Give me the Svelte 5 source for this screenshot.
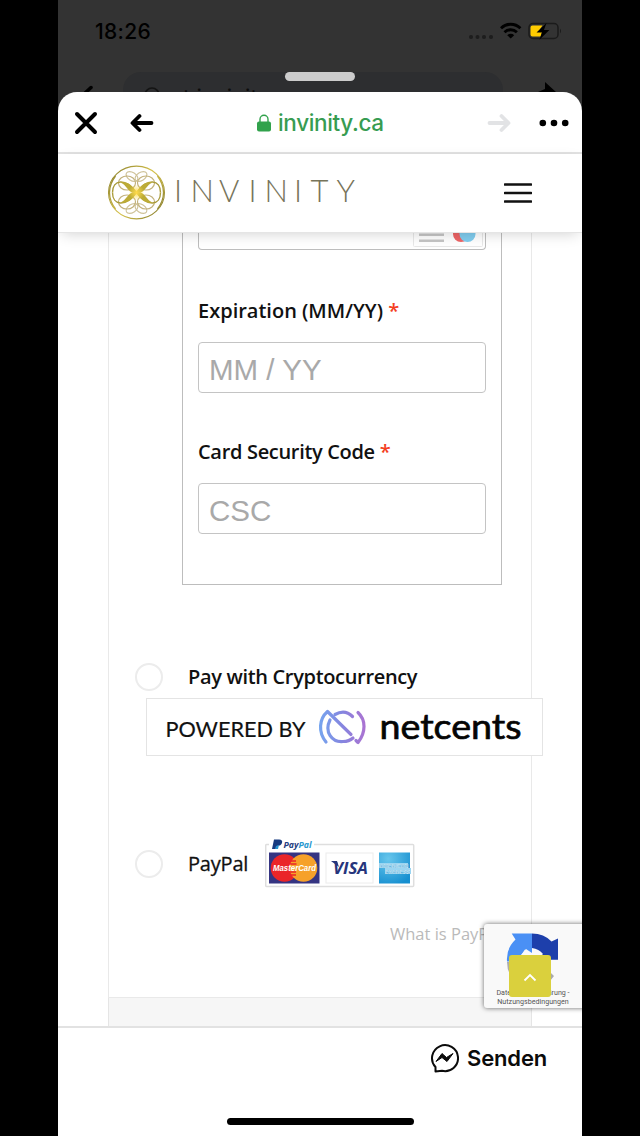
<script lang="ts">
	const fields = [
		{ id: 'expiration', label: 'Expiration (MM/YY)', placeholder: 'MM / YY' },
		{ id: 'security', label: 'Card Security Code', placeholder: 'CSC' }
	];

	// quarter of the emblem, mirrored into the other three
	const mirrors = ['1 1', '-1 1', '1 -1', '-1 -1'];
</script>

<div class="phone">
	<div class="backdrop">
		<div class="status">
			<span class="time">18:26</span>
			<svg class="signal" width="94" height="20" viewBox="0 0 94 20">
				<g fill="#1d1d1d">
					<circle cx="3" cy="16" r="2" />
					<circle cx="9.5" cy="16" r="2" />
					<circle cx="16" cy="16" r="2" />
					<circle cx="23" cy="16" r="2" />
				</g>
				<g fill="none" stroke="#000" stroke-width="2.9">
					<path d="M33 7.2a14 14 0 0 1 19.400 0" />
					<path d="M36.500 11.200a9 9 0 0 1 12.400 0" />
				</g>
				<path d="M39.200 14.200a5 5 0 0 1 7 0l-3.500 3.200z" />
				<rect x="61" y="2.500" width="29" height="15" rx="4" fill="none" stroke="#1b1b1b" stroke-width="1.500" />
				<path d="M92 7.500q2 2.500 0 5z" fill="#1b1b1b" />
				<path d="M64.500 4.500h10l-4.500 6.500h4l-1.500 4.500h-8q-2 0-2-2v-7q0-2 2-2z" fill="#fc0" />
				<path d="M78.500 2l-10 9.400h5.500l-2.600 7.300 10-9.700h-5.500z" />
			</svg>
		</div>
		<div class="grabber"></div>
		<div class="behind">
			<svg class="behind-back" width="12" height="10" viewBox="0 0 12 10"><path d="M10 2.500L2 10" stroke="#000" stroke-width="3.500" stroke-linecap="round" /></svg>
			<div class="search">
				<svg width="18" height="18" viewBox="0 0 18 18"><circle cx="9" cy="9" r="7" fill="none" stroke="#141414" stroke-width="1.700" /></svg>
				<span>t invinity</span>
			</div>
			<svg class="share" width="18" height="10" viewBox="0 0 18 10"><path d="M7 0l11 10H0L7 7z" /></svg>
		</div>
	</div>

	<div class="sheet">
		<header class="browser">
			<svg class="close" width="24" height="24" viewBox="0 0 24 24"><path d="M3 3l18 18M21 3L3 21" /></svg>
			<svg class="arrow back" width="24" height="20" viewBox="0 0 24 20"><path d="M21.500 10H3M9.500 3L2.500 10l7 7" /></svg>
			<div class="address">
				<svg width="16" height="18" viewBox="0 0 16 18">
					<path d="M4 9V5.200a4 4 0 0 1 8 0V9" fill="none" stroke="#31a24c" stroke-width="1.400" />
					<rect x="1" y="7.500" width="14" height="10" rx="2" fill="#31a24c" />
				</svg>
				<span>invinity.ca</span>
			</div>
			<svg class="arrow forward" width="24" height="20" viewBox="0 0 24 20"><path d="M2.500 10H21M14.500 3l7 7-7 7" /></svg>
			<svg class="dots" width="30" height="8" viewBox="0 0 30 8">
				<circle cx="3.800" cy="4" r="3.300" />
				<circle cx="15" cy="4" r="3.300" />
				<circle cx="26.200" cy="4" r="3.300" />
			</svg>
		</header>

		<div class="site">
			<svg class="logo" width="252" height="56" viewBox="0 0 252 56">
				<defs>
					<linearGradient id="gold" gradientUnits="userSpaceOnUse" x1="-26" y1="-20" x2="26" y2="20">
						<stop offset="0" stop-color="#8f8430" />
						<stop offset="0.500" stop-color="#d6c24a" />
						<stop offset="1" stop-color="#8a8030" />
					</linearGradient>
					<radialGradient id="glow">
						<stop offset="0" stop-color="#ffd94a" />
						<stop offset="1" stop-color="#ffe052" stop-opacity="0" />
					</radialGradient>
				</defs>
				<g fill="none" stroke="url(#gold)" transform="translate(29.500 27.500)">
					<ellipse rx="28" ry="26.400" stroke-width="1.100" />
					<path d="M-21-16.500C-29-6-29 6-21 16.500M21-16.500C29-6 29 6 21 16.500" stroke-width="1.300" />
					{#each mirrors as scale}
						<g transform="scale({scale})">
							<ellipse cx="-4.500" cy="-16" rx="6.500" ry="4" transform="rotate(32 -4.500 -16)" stroke="#cfc39a" stroke-width="1.200" />
							<ellipse cx="-9.500" cy="-9.500" rx="8.500" ry="7" stroke="#c3b27c" stroke-width="1.200" />
							<path d="M-24 0C-24-13-11-15 0 0" stroke-width="1.400" />
							<path d="M0 0C-4-8-10-11-16-10C-10-8-8 2 0 0" fill="#bcab36" stroke="none" />
						</g>
					{/each}
					<circle r="8" fill="url(#glow)" stroke="none" />
				</g>
				<text x="67 83.500 112 141.500 157.500 187 203.500 229.500" y="37">INVINITY</text>
			</svg>
			<svg class="menu" width="28" height="22" viewBox="0 0 28 22"><path d="M1 2.500h26M1 11h26M1 19.500h26" /></svg>
		</div>

		<main>
			<div class="payment">
				<div class="card">
					<div class="number">
						<svg width="72" height="15" viewBox="0 0 72 15">
							<path d="M.500 0v12.500q0 1 1 1h67q1 0 1-1V0" fill="none" stroke="#e8e8e8" />
							<path d="M6 1.700h25M6 7.700h25" stroke="#c6c6c6" stroke-width="2.400" />
							<circle cx="48" cy="1" r="8" fill="#ee6566" />
							<circle cx="54.500" cy="1" r="8" fill="#81cdef" />
						</svg>
					</div>
					{#each fields as field}
						<label class={field.id} for={field.id}>{field.label} <i>*</i></label>
						<input id={field.id} type="text" placeholder={field.placeholder} />
					{/each}
				</div>

				<div class="method crypto">
					<span class="radio"></span>
					<span class="name">Pay with Cryptocurrency</span>
				</div>
				<div class="powered">
					<svg width="394" height="56" viewBox="0 0 394 56">
						<defs>
							<linearGradient id="violet" gradientUnits="userSpaceOnUse" x1="172" y1="0" x2="219" y2="0">
								<stop offset="0" stop-color="#75a5ef" />
								<stop offset="0.500" stop-color="#8585df" />
								<stop offset="1" stop-color="#ac72d1" />
							</linearGradient>
						</defs>
						<text class="by" x="18.500" y="37.500" textLength="140" lengthAdjust="spacingAndGlyphs">POWERED BY</text>
						<g fill="none" stroke="url(#violet)" stroke-width="3.200" stroke-linecap="round" stroke-linejoin="round">
							<path d="M179 43C171 33 172 20 180.500 12.500L204 35.500" />
							<path d="M183 21C177 33 185 43.500 196 42.500Q202 42.500 206 39" />
							<path d="M188 15.500Q198 10 205.500 17.500" />
							<path d="M211 13.500C219 21 219 33 211 43.500l-2-2" />
						</g>
						<text class="netcents" x="232.500" y="39.500" textLength="142" lengthAdjust="spacingAndGlyphs">netcents</text>
					</svg>
				</div>

				<div class="method paypal">
					<span class="radio"></span>
					<span class="name">PayPal</span>
					<svg class="cards" width="150" height="50" viewBox="0 0 150 50">
						<rect x="0.700" y="5.500" width="148" height="42" rx="1" fill="#fff" stroke="#dedede" stroke-width="1.500" />
						<path d="M4 3h45v6H4z" fill="#fff" />
						<path d="M9 .5h5q4 0 3 3.500-1 3-5 3l-1 3H7z" fill="#173b80" />
						<path d="M14 6l-1 4h-3l1-3z" fill="#2794cf" />
						<text class="pp" x="18.500" y="8.500" textLength="28" lengthAdjust="spacingAndGlyphs"><tspan fill="#243c80">Pay</tspan><tspan fill="#2898cf">Pal</tspan></text>
						<rect x="4" y="13.500" width="50.500" height="31" fill="#353482" />
						<circle cx="19.500" cy="29" r="13.800" fill="#ea2529" />
						<circle cx="38.500" cy="29" r="13.800" fill="#f6a12a" />
						<path d="M25 22h6M24.500 25h7M25 33h6M26 36h5" stroke="#ea2529" stroke-width="1.500" />
						<text class="mc" x="8" y="32" textLength="43" lengthAdjust="spacingAndGlyphs">MasterCard</text>
						<rect x="61" y="14" width="47" height="30" fill="#fff" stroke="#ececec" />
						<path d="M66 22h6l2 6z" fill="#26357c" />
						<text class="visa" x="68" y="34.500" textLength="35" lengthAdjust="spacingAndGlyphs">VISA</text>
						<defs>
							<radialGradient id="amex" cx="0.300" cy="0.200" r="0.900">
								<stop offset="0" stop-color="#67c6ec" />
								<stop offset="1" stop-color="#168fd0" />
							</radialGradient>
						</defs>
						<rect x="114" y="13.500" width="31" height="31" fill="url(#amex)" />
						<path d="M114 24h29v5h3v6h-26v-6h-6z" fill="#9bd5f1" />
						<text class="amex" x="114.500" y="29" textLength="29" lengthAdjust="spacingAndGlyphs">AMERICAN</text>
						<text class="amex" x="120" y="34.500" textLength="25" lengthAdjust="spacingAndGlyphs">EXPRESS</text>
					</svg>
				</div>
				<div class="what">What is PayPal?</div>
			</div>
			<div class="place-order"></div>

			<div class="captcha">
				<svg width="60" height="56" viewBox="0 0 60 56">
					<path d="M6 31h11q1 8 7 11l-8 10Q6 44 6 31z" fill="#ababab" />
					<path d="M34 47q9-1 14-7l5 5-4 5z" fill="#ababab" />
					<path d="M10.700 2.500H31v21l-7-5-8 12H6q-1-13 8.500-22z" fill="#4a90f5" />
					<path d="M31 2.500q12 0 19.500 8L57 7.500v21.300H41q-4-7-10-11z" fill="#1d3fab" />
					<path d="M20 24l5-6 6 4v-5q7 1 11 6l-5 5H18z" fill="#f9f9f9" />
				</svg>
				<p>Datenschutzerklärung -<br />Nutzungsbedingungen</p>
			</div>
			<button class="to-top" aria-label="Nach oben">
				<svg width="14" height="9" viewBox="0 0 14 9"><path d="M1.500 7.500L7 2l5.500 5.500" /></svg>
			</button>
		</main>

		<footer>
			<div class="send">
				<svg width="30" height="30" viewBox="0 0 30 30">
					<path d="M6.500 24A13 13 0 1 1 13 27.800L6.500 28.500z" fill="none" stroke="#0b0b0b" stroke-width="2" stroke-linejoin="round" />
					<path d="M7 18.500l6-8 4.500 4 6.500-4-6 8-5-4z" fill="#0b0b0b" stroke="#0b0b0b" stroke-linejoin="round" />
				</svg>
				<span>Senden</span>
			</div>
			<div class="home"></div>
		</footer>
	</div>
</div>

<style>
	:global(body) {
		background: #000;
	}
	.phone {
		width: 524px;
		height: 1136px;
		margin: 0 auto;
		background: #333;
		overflow: hidden;
		font-family: 'Open Sans', sans-serif;
		color: #111;
	}
	svg {
		display: block;
		flex: none;
	}
	.backdrop {
		height: 92px;
		display: flex;
		flex-direction: column;
		position: relative;
		overflow: hidden;
	}
	.status {
		height: 72px;
		box-sizing: border-box;
		padding: 20px 20px 0 37px;
		display: flex;
		justify-content: space-between;
		align-items: flex-start;
	}
	.time {
		font: 500 21px/24px Inter, sans-serif;
		letter-spacing: 0.3px;
		color: #000;
	}
	.signal {
		margin-top: 1px;
	}
	.grabber {
		position: absolute;
		z-index: 1;
		top: 72px;
		left: 227px;
		width: 70px;
		height: 9px;
		border-radius: 5px;
		background: #ccc;
	}
	.behind {
		height: 20px;
		display: flex;
		align-items: flex-start;
	}
	.behind-back {
		margin: 13px 0 0 23px;
	}
	.search {
		width: 380px;
		height: 50px;
		margin-left: 30px;
		padding: 14px 0 0 20px;
		box-sizing: border-box;
		border-radius: 18px;
		background: #2d2e30;
		display: flex;
		gap: 22px;
		font: 22px/24px Inter, sans-serif;
		color: #0c0c0c;
	}
	.search span {
		margin-top: -1px;
	}
	.share {
		margin: 10px 0 0 35px;
	}

	.sheet {
		height: 1044px;
		display: flex;
		flex-direction: column;
		background: #fff;
		border-radius: 19px 19px 0 0;
		overflow: hidden;
	}
	.browser {
		height: 62px;
		box-sizing: border-box;
		padding: 2px 13px 0 16px;
		display: flex;
		align-items: center;
		border-bottom: 2px solid #e2e2e2;
	}
	.close {
		fill: none;
		stroke: #000;
		stroke-width: 4;
		stroke-linecap: round;
	}
	.arrow {
		fill: none;
		stroke: #000;
		stroke-width: 3.8;
		stroke-linecap: round;
		stroke-linejoin: round;
	}
	.back {
		margin-left: 32px;
	}
	.forward {
		stroke: #e2e3e5;
		margin-right: 28px;
	}
	.address {
		margin: 0 auto 0 102px;
		display: flex;
		align-items: center;
		gap: 6px;
		font: 500 22.5px/28px Inter, sans-serif;
		letter-spacing: -0.35px;
		color: #379c51;
	}
	.site {
		height: 79px;
		box-sizing: border-box;
		padding: 0 50px 0 49px;
		display: flex;
		align-items: center;
		justify-content: space-between;
		border-bottom: 1px solid #e5e5e5;
		box-shadow: 0 4px 14px -4px rgba(0, 0, 0, 0.2);
		position: relative;
		z-index: 1;
		background: #fff;
	}
	.logo text {
		font: 300 31px Lato, sans-serif;
		fill: #77745a;
	}
	.menu {
		fill: none;
		stroke: #111;
		stroke-width: 2.7;
		stroke-linecap: round;
	}

	main {
		height: 793px;
		position: relative;
		overflow: hidden;
	}
	.payment {
		width: 424px;
		height: 765px;
		box-sizing: border-box;
		margin-left: 50px;
		border: 1px solid #e9e9e9;
		border-top: 0;
	}
	.card {
		width: 320px;
		height: 352px;
		box-sizing: border-box;
		margin-left: 73px;
		padding: 0 15px;
		border: 1px solid #bdbdbd;
		border-top: 0;
		display: flex;
		flex-direction: column;
	}
	.number {
		height: 17px;
		box-sizing: border-box;
		border: 1px solid #bdbdbd;
		border-top: 0;
		border-radius: 0 0 4px 4px;
		display: flex;
		justify-content: flex-end;
		margin-bottom: 47px;
	}
	label {
		font-weight: 600;
		font-size: 20px;
		line-height: 28px;
	}
	label.security {
		letter-spacing: -0.32px;
	}
	label i {
		font-style: normal;
		color: #f4401f;
	}
	input {
		height: 51px;
		box-sizing: border-box;
		margin: 17px 0 45px;
		padding: 5px 10px 0;
		border: 1.5px solid #c4c4c4;
		border-radius: 4px;
		background: #fff;
		font: 29.5px 'Liberation Sans', sans-serif;
	}
	input::placeholder {
		color: #a9a9a9;
	}
	.method {
		display: flex;
		align-items: center;
		padding-left: 26px;
	}
	.crypto {
		height: 30px;
		margin-top: 77px;
	}
	.radio {
		width: 28px;
		height: 28px;
		box-sizing: border-box;
		border: 2px solid #ececec;
		border-radius: 50%;
		margin-right: 25px;
	}
	.name {
		font-weight: 600;
		font-size: 20px;
		line-height: 28px;
		letter-spacing: -0.33px;
	}
	.powered {
		width: 397px;
		height: 58px;
		box-sizing: border-box;
		margin: 6px 0 0 37px;
		border: 1px solid #e4e4e4;
		background: #fff;
		position: relative;
	}
	.by {
		font: 22px Lato, sans-serif;
		fill: #111;
		stroke: #111;
		stroke-width: 0.2;
	}
	.netcents {
		font: 400 35px Lato, sans-serif;
		fill: #050505;
		stroke: #050505;
		stroke-width: 0.7;
	}
	.paypal {
		height: 50px;
		margin-top: 83px;
	}
	.paypal .name {
		font-weight: 500;
		letter-spacing: -0.2px;
		-webkit-text-stroke: 0.3px #111;
	}
	.cards {
		margin-left: 17px;
	}
	.pp {
		font: italic 700 9.5px 'Open Sans', sans-serif;
	}
	.mc {
		font: italic 700 9px 'Liberation Sans', sans-serif;
		fill: #fff;
	}
	.visa {
		font: italic 700 16.5px 'Open Sans', sans-serif;
		fill: #26357c;
	}
	.amex {
		font: 700 6px 'Liberation Sans', sans-serif;
		fill: #e4f5fc;
		stroke: #2792cd;
		stroke-width: 0.2;
	}
	.what {
		margin-top: 33px;
		padding-left: 281px;
		font-size: 16.5px;
		line-height: 24px;
		color: #bababa;
		white-space: nowrap;
	}
	.place-order {
		width: 424px;
		height: 40px;
		box-sizing: border-box;
		margin-left: 50px;
		border: 1px solid #e5e5e5;
		border-top: 0;
		background: #f6f6f6;
	}
	.captcha {
		position: absolute;
		top: 691px;
		left: 426px;
		width: 110px;
		height: 84px;
		box-sizing: border-box;
		padding: 7px 0 0 17px;
		border-radius: 3px;
		background: #f9f9f9;
		box-shadow: 0 0 5px rgba(0, 0, 0, 0.6);
	}
	.captcha p {
		width: 80px;
		margin: 2px 0 0 -8px;
		font: 7.1px/8.5px Roboto, sans-serif;
		letter-spacing: 0.02px;
		color: #555;
		text-align: center;
		white-space: nowrap;
	}
	.to-top {
		position: absolute;
		top: 722px;
		left: 451px;
		width: 42px;
		height: 42px;
		padding: 2px 0 0;
		border: 0;
		border-radius: 3px;
		background: #dad03d;
		display: flex;
		align-items: center;
		justify-content: center;
	}
	.to-top path {
		fill: none;
		stroke: #fff;
		stroke-width: 1.8;
	}

	footer {
		flex: 1;
		display: flex;
		flex-direction: column;
		box-sizing: border-box;
		border-top: 2px solid #e2e2e2;
		background: #fff;
		position: relative;
	}
	.send {
		display: flex;
		align-items: center;
		gap: 8px;
		margin: 15px 0 0 372px;
		font: 600 22px/30px Inter, sans-serif;
		letter-spacing: -0.15px;
		color: #0b0b0b;
	}
	.send svg {
		margin-left: -1px;
	}
	.home {
		width: 187px;
		height: 7px;
		margin: auto 0 11px 169px;
		border-radius: 4px;
		background: #000;
	}
</style>
